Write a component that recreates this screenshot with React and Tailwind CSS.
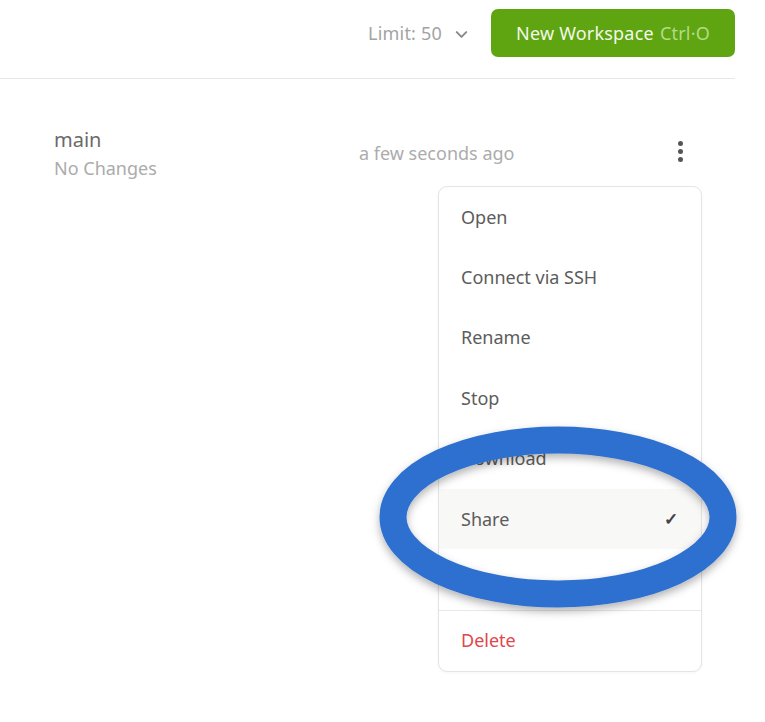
import React from 'react';
import { ChevronDown } from 'lucide-react';

const menuItems = ['Open', 'Connect via SSH', 'Rename', 'Stop', 'Download'];

const App = () => {
  return (
    <div className="relative w-[765px] h-[722px] bg-white overflow-hidden" style={{ fontFamily: '"Noto Sans", sans-serif' }}>
      {/* Header */}
      <div className="w-[735px] h-[79px] border-b border-[#e6e6e6] flex items-start justify-end pt-[9px]">
        <button className="flex items-center gap-[10px] h-[48px] mr-[20px] text-[18px] tracking-[0.2px] text-[#a3a3a3]">
          Limit: 50
          <ChevronDown size={19} strokeWidth={2.5} className="text-[#8a8a8a] mt-[2px]" />
        </button>
        <button className="h-[48px] w-[244px] rounded-[7px] bg-[#5fa411] text-[18px] tracking-[0.2px] text-[#f2f9e9] flex items-center justify-center">
          New Workspace<span className="ml-[6px] text-[#b3dc86]">Ctrl·O</span>
        </button>
      </div>

      {/* Workspace row */}
      <div className="flex items-start pl-[54px] pr-[75px] pt-[47px]">
        <div className="flex flex-col w-[305px]">
          <span className="text-[20px] leading-[27px] text-[#6a6a6a]">main</span>
          <span className="text-[18px] leading-[30px] text-[#ababab]">No Changes</span>
        </div>
        <span className="mt-[14px] text-[18px] text-[#acacac]">a few seconds ago</span>
        <div className="ml-auto mt-[15px] flex flex-col items-center gap-[3px] w-[20px]">
          <span className="w-[5px] h-[5px] rounded-full bg-[#555]"></span>
          <span className="w-[5px] h-[5px] rounded-full bg-[#555]"></span>
          <span className="w-[5px] h-[5px] rounded-full bg-[#555]"></span>
        </div>
      </div>

      {/* Dropdown menu */}
      <div className="absolute left-[438px] top-[186px] w-[264px] rounded-[9px] border border-[#e4e4e4] bg-white shadow-[0_1px_3px_rgba(0,0,0,0.04)] overflow-hidden">
        {menuItems.map((item) => (
          <div key={item} className="h-[60.4px] px-[22px] flex items-center text-[18px] text-[#5c5c5c]">
            {item}
          </div>
        ))}
        <div className="h-[60.4px] px-[22px] flex items-center justify-between bg-[#f8f8f7] text-[18px] text-[#5c5c5c]">
          Share
          <span className="text-[17px] font-bold text-[#444] mr-[1px]">✓</span>
        </div>
        <div className="h-[60.4px]"></div>
        <div className="border-t border-[#e8e8e8] h-[61px] px-[22px] flex items-center text-[18px] text-[#e0474c]">
          Delete
        </div>
      </div>

      {/* Annotation ellipse */}
      <svg className="absolute left-0 top-0 pointer-events-none" width="765" height="722">
        <defs>
          <filter id="sh" x="-20%" y="-20%" width="140%" height="140%">
            <feDropShadow dx="0" dy="4" stdDeviation="4" floodColor="#000" floodOpacity="0.3" />
          </filter>
        </defs>
        <ellipse cx="558" cy="517" rx="165" ry="77" fill="none" stroke="#2f6fcf" strokeWidth="27" filter="url(#sh)" />
      </svg>
    </div>
  );
};

export default App;
